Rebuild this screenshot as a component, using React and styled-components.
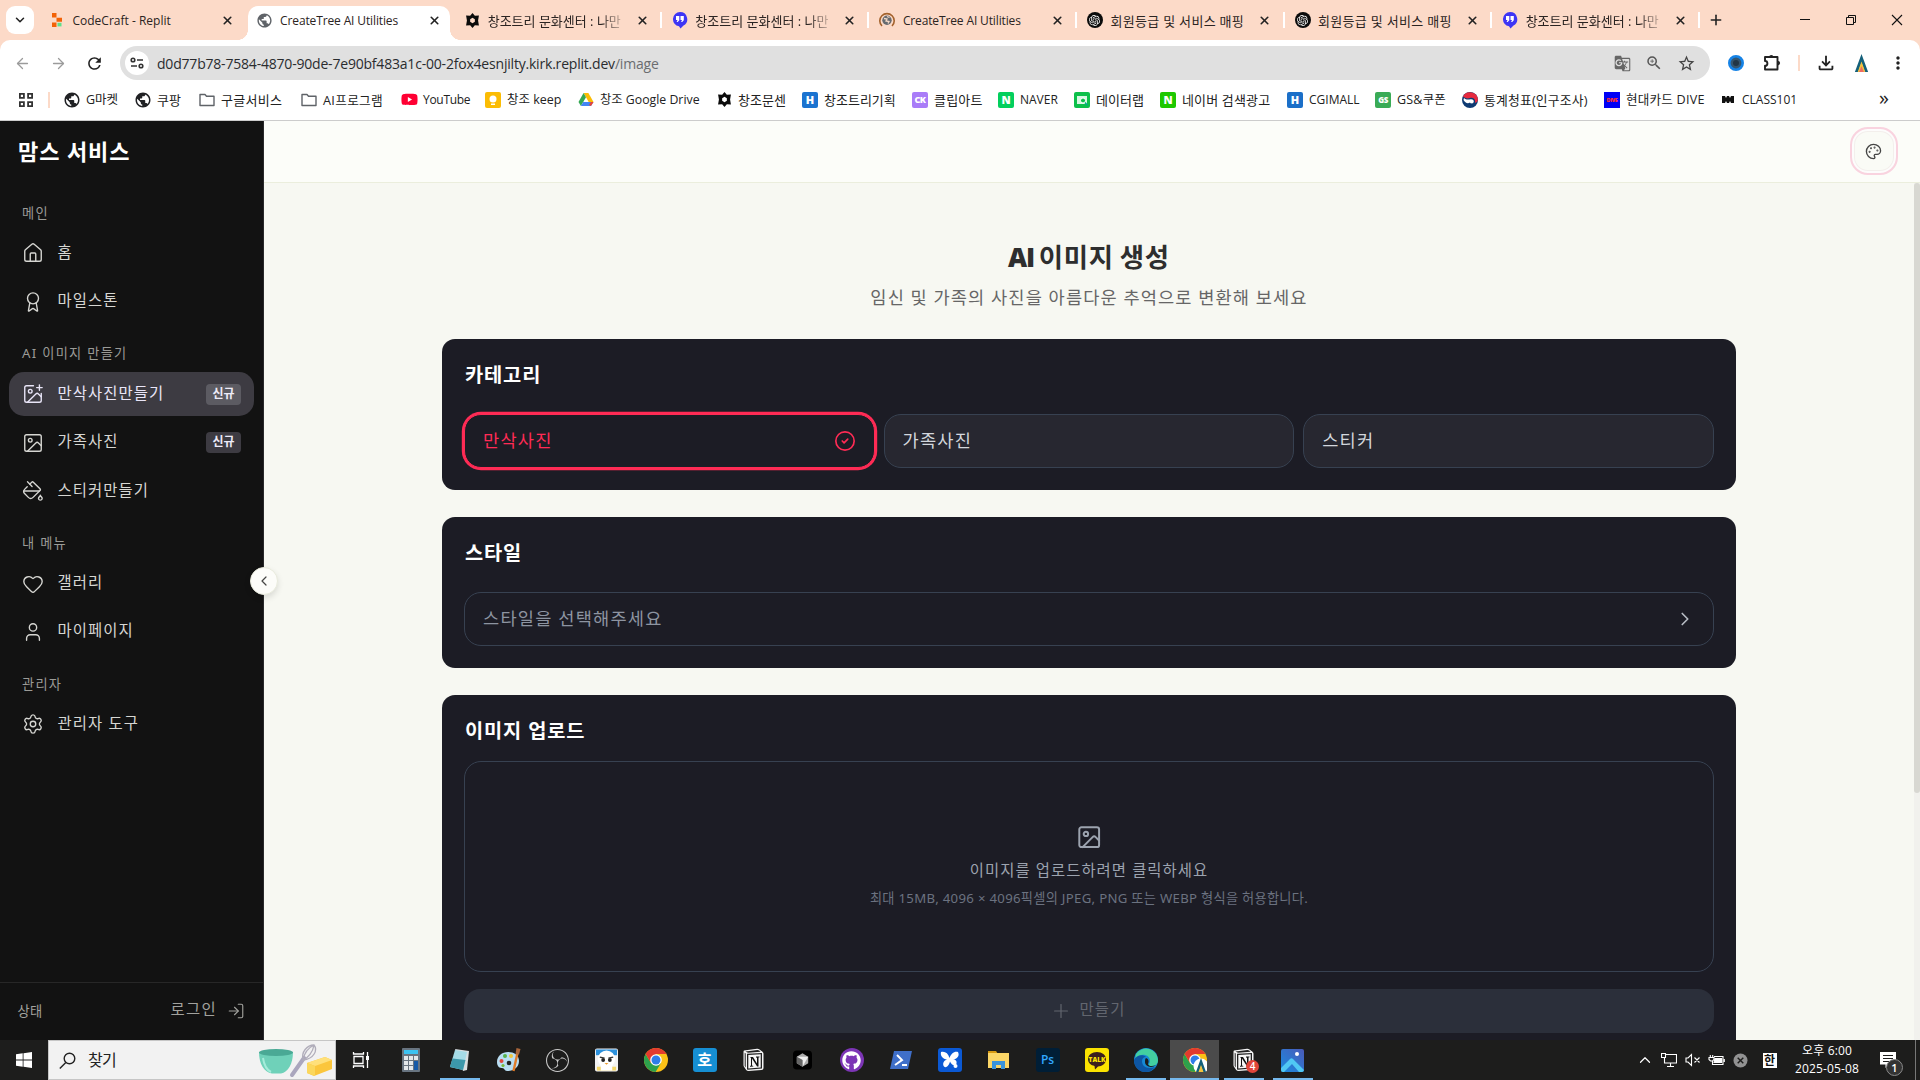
import React from "react";
import styled, { createGlobalStyle, css } from "styled-components";
import {
  ArrowLeft, ArrowRight, Award, ChevronDown, ChevronLeft, ChevronRight, ChevronUp, CircleCheck,
  Heart, House, Image as ImageIcon, ImagePlus, LogIn, PaintBucket, Palette, Plus, Settings, User, X,
} from "lucide-react";
import {
  MdPublic, MdRefresh, MdOutlineExtension, MdStarBorder, MdGTranslate, MdZoomIn, MdMoreVert,
  MdOutlineFileDownload,
} from "react-icons/md";
import { FaGithub, FaYoutube } from "react-icons/fa";
import { SiObsstudio, SiOpenai } from "react-icons/si";

const UI = `"Open Sans", "Noto Sans CJK KR", sans-serif`;
const WEB = `"Noto Sans", "Noto Sans CJK KR", sans-serif`;

const Global = createGlobalStyle`
  *, *::before, *::after { box-sizing: border-box; }
  body { margin: 0; background: #fcdac8; overflow: hidden; }
  svg { display: block; flex: none; }
`;

const Screen = styled.div`
  width: 1920px; height: 1080px; display: flex; flex-direction: column; overflow: hidden;
  font-family: ${UI};
`;

/* ---------- browser chrome ---------- */
const TabStrip = styled.div`
  height: 40px; flex: none; display: flex; align-items: center; background: #fcdac8; padding-left: 6px;
`;
const TabSearch = styled.div`
  width: 28px; height: 28px; margin-right: 4px; border-radius: 9px; background: #fff;
  display: flex; align-items: center; justify-content: center;
`;
const Tab = styled.div`
  position: relative; width: 207.6px; height: 40px; flex: none; display: flex; align-items: center;
  padding-left: 11px; gap: 7.5px; font-size: ${(p) => p.$size || 12}px; color: #2b2422;
  ${(p) => p.$sep && css`
    &::after { content: ""; position: absolute; left: -1px; top: 12px; width: 2px; height: 16px; background: #fff; }
  `}
  ${(p) => p.$active && css`
    &::before {
      content: ""; position: absolute; z-index: 0; left: 2.4px; right: 3px; top: 6px; bottom: 0;
      background: #fff; border-radius: 10px 10px 0 0;
    }
    &::after {
      content: ""; position: absolute; left: -7.6px; right: -7px; bottom: 0; height: 10px;
      background:
        radial-gradient(circle at 0 0, transparent 9.6px, #fff 10px) left / 10px 10px no-repeat,
        radial-gradient(circle at 100% 0, transparent 9.6px, #fff 10px) right / 10px 10px no-repeat;
    }
  `}
`;
const TabIcon = styled.div`
  position: relative; z-index: 1; width: 16px; height: 16px; flex: none;
  display: flex; align-items: center; justify-content: center;
`;
const TabTitle = styled.div`
  position: relative; z-index: 1; width: 137px; flex: none; margin-right: -7.5px;
  white-space: nowrap; line-height: 20px; letter-spacing: ${(p) => p.$ls || 0}px; margin-top: 2px;
  ${(p) => p.$fade && css`mask-image: linear-gradient(90deg, #000 112px, transparent 140px);`}
`;
const TabClose = styled.div`
  position: relative; z-index: 1; width: 35px; display: flex; justify-content: center; color: #222;
`;
const NewTab = styled.div`width: 34px; display: flex; justify-content: center; color: #222; position: relative;
  &::before { content: ""; position: absolute; left: -1px; top: 0; width: 2px; height: 16px; background: #fff; }
`;
const WindowButtons = styled.div`
  margin-left: auto; display: flex; svg { width: 46px; }
`;

const Toolbar = styled.div`
  height: 46px; flex: none; display: flex; align-items: center; background: #fff;
  border-radius: 10px 10px 0 0; padding-left: 4px;
`;
const ToolButton = styled.div`
  width: ${(p) => p.$w || 36}px; flex: none; display: flex; justify-content: center; color: ${(p) => p.$c || "#222"};
`;
const Omnibox = styled.div`
  width: 1590px; height: 34px; margin-left: 8px; border-radius: 17px; background: #e0e0e0;
  display: flex; align-items: center; padding: 0 8px 0 5px; color: #2a2c2f; font-size: 14px;
`;
const SiteInfo = styled.div`
  width: 24px; height: 24px; margin-right: 8px; border-radius: 50%; background: #fff;
  display: flex; align-items: center; justify-content: center;
`;
const Url = styled.div`
  flex: 1; letter-spacing: -0.2px; white-space: nowrap; span { color: #6b6d70; }
`;
const ToolSeparator = styled.div`width: 2px; height: 16px; background: #fcdac8; margin: ${(p) => p.$m || "0 8px"};`;

const Bookmarks = styled.div`
  height: 35px; flex: none; display: flex; align-items: center; background: #fff; padding: 0 0 7px 18px;
  border-bottom: 1px solid #ccc; color: #222;
`;
const Bookmark = styled.div`
  width: ${(p) => p.$w}px; flex: none; display: flex; align-items: center; gap: 6px; white-space: nowrap;
  font-size: ${(p) => p.$size || 13}px; line-height: 18px; letter-spacing: ${(p) => p.$ls || 0}px;
`;
const BookmarkIcon = styled.div`width: 16px; height: 16px; display: flex; align-items: center; justify-content: center;`;
const Letter = styled.div`
  width: 16px; height: 16px; border-radius: ${(p) => p.$r ?? 2}px; background: ${(p) => p.$bg}; color: ${(p) => p.$c || "#fff"};
  font: 800 ${(p) => p.$fs || 11}px/16px ${UI}; letter-spacing: ${(p) => (p.$fs < 10 ? -0.5 : 0)}px;
  display: flex; align-items: center; justify-content: center;
`;
const More = styled.div`margin-left: auto; width: 72px; text-align: center; font-size: 20px; line-height: 16px; margin-top: -3px;`;

/* ---------- web page ---------- */
const Page = styled.div`
  height: 919px; flex: none; display: flex; background: #f7f8f2; font-family: ${WEB}; overflow: hidden;
`;
const Sidebar = styled.aside`
  position: relative; width: 264px; flex: none; background: #121212; border-right: 1px solid #29292b;
  display: flex; flex-direction: column; color: #d6d6d2;
`;
const Brand = styled.h1`
  margin: 0; padding: 13px 0 0 18px; height: 82.5px; font-size: 22px; line-height: 34px; font-weight: 700;
  color: #fff; letter-spacing: 0.9px;
`;
const NavGroup = styled.nav`margin-bottom: 20.6px; padding: 0 9px;`;
const NavHeading = styled.div`
  height: 18px; margin-bottom: 9.9px; padding-left: 13px; font-size: 13.2px; line-height: 18px;
  letter-spacing: 1.3px; color: #9b9b97;
`;
const NavItem = styled.div`
  height: 44px; margin-bottom: 4.4px; padding: 0 13px; border-radius: 15px; display: flex; align-items: center; gap: 13.5px;
  font-size: 15.4px; line-height: 22px; letter-spacing: 1.1px; white-space: nowrap;
  ${(p) => p.$active && css`background: #3d3b42; color: #e9e5f7;`}
  &:last-child { margin-bottom: 0; }
`;
const NavLabel = styled.span`flex: 1; margin-top: -1px;`;
const Badge = styled.span`
  width: 35px; height: 21px; border-radius: 4px; background: ${(p) => (p.$active ? "#5c5b62" : "#3d3b42")};
  color: #eeebf8; font-size: 12px; font-weight: 600; line-height: 20px; letter-spacing: 0; text-align: center;
`;
const Collapse = styled.button`
  position: absolute; z-index: 2; left: 250px; top: 446px; width: 28px; height: 28px; padding: 0; border-radius: 50%;
  border: 1px solid #e9ebdd; background: #fcfcf9; color: #444; display: flex; align-items: center; justify-content: center;
  box-shadow: 0 3px 6px rgba(0, 0, 0, 0.12);
`;
const SideFooter = styled.div`
  margin-top: auto; height: 58px; border-top: 1px solid #272727; padding: 0 18px 2px 17.5px; color: #a2a29e;
  display: flex; align-items: center; font-size: 13.2px; letter-spacing: 0.4px;
`;
const Login = styled.div`
  margin-left: auto; display: flex; align-items: center; gap: 10px; font-size: 15.4px; line-height: 22px; letter-spacing: 1.3px;
  span { margin-top: -2px; }
`;

const Main = styled.main`flex: 1; display: flex; flex-direction: column; min-width: 0;`;
const TopBar = styled.header`
  height: 62px; flex: none; background: #fcfdf9; border-bottom: 1px solid #ebeedd;
  display: flex; justify-content: flex-end; align-items: center; padding: 0 22.5px 1px 0;
`;
const ThemeButton = styled.button`
  width: 48px; height: 48px; border-radius: 18px; border: 2px solid #f9d3df; background: #fafbf6;
  padding: 0; display: flex; align-items: center; justify-content: center; color: #444;
  box-shadow: inset 0 0 0 2px #fdfcfc, inset 0 0 0 3px #f3efec;
`;
const Scroller = styled.div`flex: 1; min-height: 0; display: flex; overflow: hidden;`;
const Content = styled.div`flex: 1; display: flex; flex-direction: column; align-items: center; padding: 56.5px 0 0 0;`;
const ScrollTrack = styled.div`width: 6px; background: #f1f1ed; flex: none;`;
const ScrollThumb = styled.div`height: 610px; border-radius: 3px; background: #d8d8d2;`;

const PageTitle = styled.h2`
  margin: 0; font: 700 26.4px/35px "Open Sans", "Noto Sans CJK KR", sans-serif; color: #2e2e2e; letter-spacing: 0.75px;
  word-spacing: -1.5px; b { font-weight: 800; letter-spacing: -1.2px; margin-right: -1.5px; }
`;
const PageSubtitle = styled.p`
  margin: 9.5px 0 29px; font-size: 17.6px; line-height: 26px; color: #666; letter-spacing: 1.1px;
`;
const Cards = styled.div`width: 1294px; display: flex; flex-direction: column; gap: 27px;`;
const Card = styled.section`
  background: #1c1c25; border-radius: 13px; padding: 22px; height: ${(p) => p.$h}px; flex: none;
`;
const CardTitle = styled.h3`
  margin: 0 0 ${(p) => p.$gap || 26}px 1px; font-size: 19.8px; line-height: 27px; font-weight: 700; color: #fff; letter-spacing: 0.85px;
`;
const Options = styled.div`display: grid; grid-template-columns: repeat(3, 1fr); gap: 8.8px;`;
const Field = styled.div`
  height: 54px; border: 1px solid #374151; border-radius: 17px; padding: 0 17.5px 0 18px; display: flex; align-items: center;
  justify-content: space-between; font-size: 17.6px; line-height: 24px; color: ${(p) => p.$c || "#d3d7dd"};
  background: ${(p) => p.$bg || "transparent"};
  span { margin-top: -2px; letter-spacing: 1.2px; }
  ${(p) => p.$selected && css`
    border-color: #ff2b55; color: #ff2b55; background: #1c1c25; box-shadow: 0 0 0 2.2px #ff2b55;
  `}
`;
const DropZone = styled.div`
  height: 210.5px; border: 1px solid #374151; border-radius: 17px; display: flex; flex-direction: column; align-items: center;
  padding-top: 62px;
`;
const DropTitle = styled.div`margin-top: 9.5px; font-size: 15.4px; line-height: 22px; color: #9ca3af; letter-spacing: 1.07px;`;
const DropHint = styled.div`margin-top: 7px; font-size: 13.2px; line-height: 18px; color: #6b7280; letter-spacing: 0.3px;`;
const Generate = styled.button`
  width: 100%; height: 44px; margin-top: 17px; border: 0; border-radius: 16px; background: #2b2f3a; color: #62666f;
  display: flex; align-items: center; justify-content: center; gap: 8px; font: 15.4px/22px ${WEB}; letter-spacing: 1.2px;
  padding: 0 2px 0 0; span { margin-top: -1px; margin-left: -1px; }
`;

/* ---------- task bar ---------- */
const Taskbar = styled.div`height: 40px; flex: none; display: flex; background: #1d1d1c; color: #fff;`;
const Start = styled.div`width: 48px; display: flex; align-items: center; justify-content: center;`;
const SearchBox = styled.div`
  width: 288px; background: #f2f2f2; border: 1px solid #c6c6c6; display: flex; align-items: center; padding: 0 2px 0 10px;
  color: #222; font-size: 16px; span { flex: 1; padding-left: 12px; margin-top: -2px; letter-spacing: -0.6px; }
`;
const TaskItem = styled.div`
  position: relative; width: 49px; display: flex; align-items: center; justify-content: center;
  background: ${(p) => (p.$active ? "#4b4b4b" : "transparent")};
  &:nth-child(3) { margin-right: 1px; }
  &::after { content: ""; position: absolute; bottom: 0; height: 2px; background: #76b9ed;
    left: ${(p) => (p.$active ? 0 : 4.5)}px; right: ${(p) => (p.$active ? 0 : 4.5)}px; display: ${(p) => (p.$open ? "block" : "none")}; }
`;
const AppTile = styled.div`
  width: 24px; height: 24px; border-radius: ${(p) => p.$r ?? 3}px; background: ${(p) => p.$bg}; color: ${(p) => p.$c || "#fff"};
  font: 600 ${(p) => p.$fs || 12}px/24px ${UI}; text-align: center; display: flex; align-items: center; justify-content: center;
`;
const CountDot = styled.div`
  position: absolute; left: 27px; top: 20px; width: 13px; height: 13px; border-radius: 50%; background: #e0453a;
  font: 600 10px/13px ${UI}; text-align: center;
`;
const Tray = styled.div`margin-left: auto; display: flex; align-items: center;`;
const TrayIcon = styled.div`width: ${(p) => p.$w || 24}px; display: flex; justify-content: center;`;
const Ime = styled.div`
  width: 14px; height: 15px; background: #fff; color: #111; font: 700 12px/15px ${WEB};
  display: flex; align-items: center; justify-content: center;
`;
const Clock = styled.div`
  width: 81px; text-align: center; font-size: 12px; line-height: 18px; letter-spacing: 0.15px; padding-bottom: 1px;
`;
const Notice = styled.div`
  position: relative; width: 34px; height: 40px; margin-left: 3.5px; display: flex; align-items: center; justify-content: center;
`;
const NoticeCount = styled.div`
  position: absolute; left: 15px; top: 19px; width: 17px; height: 17px; border: 1px solid #8a8a8a; border-radius: 50%;
  background: #333; font: 600 11px/15px ${UI}; text-align: center;
`;
const ShowDesktop = styled.div`width: 5px; height: 40px; border-left: 1px solid #777; margin-left: 10px;`;

/* ---------- drawings ---------- */
const HexStar = ({ s = 15 }) => (
  <svg width={s} height={s} viewBox="0 0 14 14">
    <path fillRule="evenodd" fill="#0b0b0b" d="M7 0l2.200 2.500 3.800-.2L12.200 7 13 11.700l-3.800-.2L7 14l-2.200-2.500-3.800.2L1.800 7 1 2.300l3.800.2zM7 4.500L4.800 5.750v2.500L7 9.500l2.200-1.250v-2.500z" />
  </svg>
);
const Quote = () => (
  <svg width="16" height="17" viewBox="0 0 16 17">
    <path fill="#3d35f5" d="M8 0a7.200 7.200 0 0 1 3.500 13.500L8.500 16.500 7 14.300A7.200 7.200 0 0 1 8 0z" />
    <path fill="#fff" d="M4 4h3.300v4.200L5.700 10H4.600l.9-2H4zm4.500 0h3.300v4.200L10.200 10H9.100l.9-2H8.500z" />
  </svg>
);
const Swirl = () => (
  <svg width="16" height="16" viewBox="0 0 16 16" fill="none">
    <path d="M3 14A7.200 7.200 0 1 1 13 14" stroke="#a4622c" strokeWidth="1.600" />
    <circle cx="8" cy="8.200" r="4.700" fill="#666b70" />
    <path d="M5 6.500l3 .5-1 2 3 .5-1 2M8 4.500l2.500 1" stroke="#f3d8c7" strokeWidth="1.300" />
  </svg>
);
const Gpt = () => <Letter $bg="#0b0b0b" $r={8}><SiOpenai size={11} /></Letter>;
const Replit = () => (
  <svg width="16" height="16" viewBox="0 0 16 16">
    <path fill="#f26207" d="M3 1h4.500v4.500H3zM7.500 5.800H13v4H7.500zM3 10.500h4.500V15H3z" /><path fill="#5fe08a" d="M8.500 10.800h4v3.600h-4z" />
  </svg>
);
const Drive = () => (
  <svg width="16" height="15" viewBox="0 0 16 15">
    <path fill="#fbbc04" d="M5.600 1h4.800L15.500 10h-4.800z" /><path fill="#34a853" d="M5.600 1L8 5.300 2.900 14 .5 10z" />
    <path fill="#4285f4" d="M5.200 10h10.300L13 14H2.900z" /><path fill="#ea4335" d="M12.900 10h2.600L13 14l-2-1z" />
  </svg>
);
const Taegeuk = () => (
  <svg width="16" height="16" viewBox="0 0 16 16">
    <circle cx="8" cy="8" r="8" fill="#0f3b73" /><path fill="#e6293e" d="M1 4.500A8 8 0 0 1 16 8a4 4 0 0 1-3 3c1-4-2-6-5-5S3 6 1 4.500z" />
    <path fill="#fff" d="M2 6c2 2 4.500 1.500 6.500 1.200 2.500-.3 4 1.300 3 3.300-1 1.500-3 1-3.500 0C6 12 3 11 1.500 8z" />
  </svg>
);
const Chrome = ({ s = 24, children }) => (
  <svg width={s} height={s} viewBox="0 0 24 24">
    <circle cx="12" cy="12" r="12" fill="#fbc116" />
    <path fill="#2da14c" d="M1.600 6a12 12 0 0 0 10 18L17 15l-5 2-5-2z" />
    <path fill="#e33b2e" d="M1.600 6A12 12 0 0 1 22.400 6H12l-5 9z" />
    <circle cx="12" cy="12" r="5.800" fill="#fff" /><circle cx="12" cy="12" r="4.500" fill="#2f7de9" />{children}
  </svg>
);
const Peak = ({ s = 18 }) => (
  <svg width={s} height={s + 2} viewBox="0 0 18 20">
    <path fill="#14607a" d="M9 0l7 19h-3.500L9 9 5.500 19H2z" /><path fill="#f3c23c" d="M9 8l4 11H5z" /><path fill="#ef6a63" d="M9 13l2.500 6h-5z" />
  </svg>
);
const Tune = () => (
  <svg width="14" height="12" viewBox="0 0 14 12" fill="none" stroke="#333" strokeWidth="1.600">
    <circle cx="3" cy="3" r="1.800" /><path d="M7 3h6M1 9h6" /><circle cx="11" cy="9" r="1.800" />
  </svg>
);
const Apps = () => (
  <svg width="16" height="16" viewBox="0 0 16 16" fill="none" stroke="#333" strokeWidth="1.800">
    <path d="M1.900 1.900h4v4h-4zM10.100 1.900h4v4h-4zM1.900 10.100h4v4h-4zM10.100 10.100h4v4h-4z" />
  </svg>
);
const Folder = () => (
  <svg width="16" height="14" viewBox="0 0 16 14" fill="none" stroke="#5f6368" strokeWidth="1.400"><path d="M1 1.500h5l1.500 1.800H15v9.200H1z" strokeLinejoin="round" /></svg>
);
const Bowl = () => (
  <svg width="76" height="36" viewBox="0 0 76 36">
    <path d="M2 10h34c0 12-5 20-12 21.500h-9C7 30 2 22 2 10z" fill="#6fd1b9" /><ellipse cx="19" cy="10.500" rx="17" ry="3.500" fill="#4aa995" />
    <path d="M6 16c1 7 4 12 8 14" stroke="#a5ecda" strokeWidth="2" fill="none" />
    <path d="M35 33l12-17" stroke="#aaa6bd" strokeWidth="4" strokeLinecap="round" />
    <path d="M46 18c-2-8 4-15 11-15 4 5 0 14-11 15zM46 18c1-6 5-12 11-15M46 18c5-2 10-8 11-15" fill="none" stroke="#b0adba" strokeWidth="1.300" />
    <path d="M50 21l18-6 7 3v9l-18 7-7-3z" fill="#fbc63c" /><path d="M50 21l18-6 7 3-17 6z" fill="#ffe07a" /><path d="M50 21l8 3v10l-8-3z" fill="#fbd75c" />
  </svg>
);
const TaskView = () => (
  <svg width="18" height="16" viewBox="0 0 18 16" fill="none" stroke="#fff" strokeWidth="1.300">
    <path d="M2 4.500h9v7H2zM1.500 0v2h10V0M1.500 16v-2h10v2M15.500 0v16" /><path d="M14 4h3v4h-3z" fill="#fff" stroke="none" />
  </svg>
);
const Calc = () => (
  <svg width="20" height="24" viewBox="0 0 20 24">
    <rect x="1" width="18" height="24" rx="1" fill="#687480" /><path fill="#3cc3f2" d="M3 2h14v4H3z" />
    <path fill="#e3e8eb" d="M3 8h4v4H3zM8 8h4v4H8zM13 8h4v4h-4zM3 13h4v4H3zM8 13h4v4H8zM3 18h4v4H3zM8 18h4v4H8z" /><path fill="#155aa8" d="M13 13h4v9h-4z" />
  </svg>
);
const Notepad = () => (
  <svg width="24" height="24" viewBox="0 0 24 24">
    <path fill="#d9dee0" d="M7 1l14 2-2 19-4 1z" /><path fill="#a5dbe6" d="M7 2l12 2-4 18-13-3z" /><path fill="#3c98ab" d="M4.500 10.500L17.500 12l-2.500 10-13-3z" />
  </svg>
);
const Paint = () => (
  <svg width="24" height="24" viewBox="0 0 24 24">
    <path fill="#b9def2" d="M11 4C5 4 0 8 0 14c0 5 3 6 5 6 3 0 2 3 5 3 6 0 12-3 12-10 0-6-5-9-11-9z" /><circle cx="4.500" cy="13" r="2" fill="#e2473d" />
    <circle cx="8" cy="8" r="2" fill="#57b24b" /><circle cx="14" cy="8" r="2" fill="#f0c73d" /><circle cx="6" cy="17.500" r="1.600" fill="#7aba3c" /><circle cx="12" cy="15" r="2.300" fill="#222" />
    <path d="M20.500 5l-4 18" stroke="#e07b28" strokeWidth="2.400" /><path d="M19.500 0l4 1-1.500 5.500-3.500-.5z" fill="#a8653a" />
  </svg>
);
const Mascot = () => (
  <svg width="23" height="24" viewBox="0 0 24 24">
    <rect width="24" height="24" rx="2" fill="#f2f2f2" /><path fill="#2c91dc" d="M1 1h22v6H1z" /><circle cx="12" cy="11" r="9" fill="#fff" />
    <path fill="#f2d56a" d="M2 19h20v4H2z" /><path fill="#fff" d="M6 17h12v6H6z" /><circle cx="8.500" cy="12" r="2" fill="#222" /><circle cx="15.500" cy="12" r="2" fill="#222" />
    <path d="M5 9l5 1M19 9l-5 1" stroke="#333" strokeWidth="1.500" /><path fill="#ec9c2d" d="M10 15h4l-2 2z" />
  </svg>
);
const Notion = () => (
  <svg width="21" height="24" viewBox="0 0 21 24">
    <path fill="#f6f6f6" d="M1 2.500L14 .8q1.500-.1 2.500.7l3 2.300q1 .8 1 2V20q0 1.900-2 2L5.500 23q-1.500 0-2.300-1L1 18.800Q.5 18 .5 17V4q0-1.300.5-1.500z" />
    <path fill="#222" d="M2.500 3.400L14.500 2q1 0 1.700.6l1.300 1.200L5 4.800z" />
    <path fill="#222" fillRule="evenodd" d="M4 5.800L19 4.900v15.700L4.600 21.700Q4 21.700 4 21zM5.300 7v13.400l12.400-.9V6.200zM1.700 4.700l1 .9v13.800l-1-1.500z" />
    <path fill="#111" d="M7 9h3l4 6.500V9.700L13 9.400v-.8l3.500-.2v.8l-1 .3v9h-1.400L9 10.600v7l1.300.3v.7L7 18.800V18l1-.4V9.900z" />
  </svg>
);
const Cube = () => (
  <svg width="19" height="22" viewBox="0 2 20 20"><rect y="2" width="20" height="20" rx="4" fill="#000" />
    <path fill="#aaa" d="M10 5l6 3.500v7L10 19l-6-3.500v-7z" /><path fill="#eee" d="M4 8.500h12L10 19v-7z" /><path fill="#666" d="M4 8.500l6 3.500v7l-6-3.500z" /></svg>
);
const Shell = () => (
  <svg width="24" height="20" viewBox="0 0 24 20"><path fill="#3f6fc9" d="M5 1h18l-4 18H1z" /><path d="M8 5l5 5-7 5M13 15h5" stroke="#fff" strokeWidth="2" fill="none" /></svg>
);
const Butterfly = () => (
  <svg width="20" height="20" viewBox="0 0 20 20"><path fill="#fff" d="M1 2c4-1 7 1 8.500 6C11 4 14 1 18 2c2 4-1 7-5 7.500 3 0 4 2 3.500 4-1 3-5 2-6.500-2-1 4-4 7-6 5-2-3 0-6 3-7C3 9 0 6 1 2z" /><circle cx="15.500" cy="16" r="2" fill="#fff" /></svg>
);
const Explorer = () => (
  <svg width="23" height="20" viewBox="0 0 23 20"><path fill="#d79a12" d="M1 1h8l2 3H1z" /><path fill="#fbd667" d="M1 3h21v15H1z" /><path fill="#3a94dc" d="M5 11h13v8h-4v-4H9v4H5z" /></svg>
);
const Talk = () => (
  <AppTile $bg="#fbe300"><svg width="20" height="19" viewBox="0 0 20 19"><path fill="#3b1e1e" d="M10 1c5 0 9 3 9 7.300s-4 7.200-8 7.200L8 18.500 7.500 15C4 14.300 1 12 1 8.300 1 4 5 1 10 1z" />
    <text x="10" y="10.800" fontSize="6.500" fontWeight="800" textAnchor="middle" fill="#fbe300" fontFamily="Open Sans, sans-serif">TALK</text></svg></AppTile>
);
const Edge = () => (
  <svg width="24" height="24" viewBox="0 0 24 24"><circle cx="12" cy="12" r="12" fill="#1688d4" /><path fill="#43cfa0" d="M2 6a12 12 0 0 1 22 6c0 4-3 6-6 6-3 0-4-1-3-2 2-3 1-8-4-9-4-.7-7 1-10 5z" />
    <path fill="#0d56a4" d="M0 12c2-5 9-6 12-3-4 0-5 4-3 8 2 3 7 4 12 2a12 12 0 0 1-10 5C4 24 0 18 0 12z" /><path fill="#1d1d1c" d="M12 10c3 1 3 4 2 6 0 2 4 3 8 1-5 4-11 1-11-3 0-2 0-3 1-4z" /></svg>
);
const Photos = () => (
  <svg width="23" height="23" viewBox="0 0 23 23"><defs><linearGradient id="sky" x1="0" y1="1" x2="1" y2="0"><stop stopColor="#1a8be0" /><stop offset="1" stopColor="#4a5ab8" /></linearGradient></defs>
    <rect width="23" height="23" rx="2" fill="url(#sky)" /><path fill="#50c8f4" d="M0 19l9-9q1.500-1.500 3 0l11 11q-.5 2-2 2h-3L11 15l-8 8H2q-2 0-2-2z" /><circle cx="16" cy="5" r="2" fill="#fff" /></svg>
);

const K = "창조트리 문화센터 : 나만";
const TABS = [
  { icon: <Replit />, t: "CodeCraft - Replit" },
  { icon: <MdPublic size={17} color="#5f6368" />, t: "CreateTree AI Utilities", active: true, ls: -0.13 },
  { icon: <HexStar />, t: K, fade: true, size: 13 },
  { icon: <Quote />, t: K, fade: true, size: 13, sep: true },
  { icon: <Swirl />, t: "CreateTree AI Utilities", sep: true, ls: -0.13 },
  { icon: <Gpt />, t: "회원등급 및 서비스 매핑", size: 13, sep: true, ls: 0.3 },
  { icon: <Gpt />, t: "회원등급 및 서비스 매핑", size: 13, sep: true, ls: 0.3 },
  { icon: <Quote />, t: K, fade: true, size: 13, sep: true },
];

const globe = <MdPublic size={18} color="#202124" />;
const BOOKMARKS = [
  [globe, "G마켓", 71, 12.5], [globe, "쿠팡", 64, 13], [<Folder />, "구글서비스", 102, 13, 0.3], [<Folder />, "AI프로그램", 100, 12.7, 0.3],
  [<FaYoutube size={17} color="#f03" />, "YouTube", 84, 12, -0.3],
  [<Letter $bg="#fbbc04"><svg width="16" height="16" viewBox="0 0 16 16"><circle cx="8" cy="7" r="3.500" fill="#fff" /><path fill="#fff" d="M6 11.500h4V13H6z" /></svg></Letter>, "창조 keep", 93, 12.5],
  [<Drive />, "창조 Google Drive", 138, 12.3], [<HexStar />, "창조문센", 86, 13],
  [<Letter $bg="#1b73d0">H</Letter>, "창조트리기획", 110, 13], [<Letter $bg="#a97cf8" $fs={9}>CK</Letter>, "클립아트", 86, 13, 0.2],
  [<Letter $bg="#03cf5d">N</Letter>, "NAVER", 76, 12],
  [<Letter $bg="#0cc04a"><svg width="16" height="16" viewBox="0 0 16 16"><path fill="#d8f7e3" d="M3 4h10v8H3z" /><circle cx="9" cy="8.500" r="2.500" fill="#0cc04a" stroke="#fff" /><path d="M11 10.500l2.500 3" stroke="#0a8" strokeWidth="1.500" /></svg></Letter>, "데이터랩", 86, 13],
  [<Letter $bg="#1ec800">N</Letter>, "네이버 검색광고", 127, 13, 0.15], [<Letter $bg="#1b6fc8">H</Letter>, "CGIMALL", 88, 12],
  [<Letter $bg="#3aab56" $fs={8}>GS</Letter>, "GS&쿠폰", 87, 12.5, 0.2], [<Taegeuk />, "통계청표(인구조사)", 142, 12.8, 0.2],
  [<Letter $bg="#0000f5" $c="#f33" $fs={5.5} $r={0}>DIVE</Letter>, "현대카드 DIVE", 116, 12.6, 0.2],
  [<svg width="12" height="7" viewBox="0 0 12 7"><path d="M0 0h3l1 2 1-2h2l1 2 1-2h3v7H9L8 5 7 7H5L4 5 3 7H0z" fill="#111" /></svg>, "CLASS101", 80, 12],
];

const GROUPS = [
  ["메인", [[House, "홈"], [Award, "마일스톤"]]],
  ["AI 이미지 만들기", [[ImagePlus, "만삭사진만들기", true, true], [ImageIcon, "가족사진", true], [PaintBucket, "스티커만들기"]]],
  ["내 메뉴", [[Heart, "갤러리"], [User, "마이페이지"]]],
  ["관리자", [[Settings, "관리자 도구"]]],
];

const TASKS = [
  { i: <TaskView /> }, { i: <Calc /> }, { i: <Notepad />, open: true }, { i: <Paint /> },
  { i: <SiObsstudio size={23} color="#c9c9c9" /> }, { i: <Mascot /> }, { i: <Chrome /> },
  { i: <AppTile $bg="#168fd3" $fs={16}>호</AppTile> }, { i: <Notion /> }, { i: <Cube /> },
  { i: <AppTile $bg="#7c35b5" $r={12}><FaGithub size={19} /></AppTile> }, { i: <Shell /> },
  { i: <AppTile $bg="#0b59d4"><Butterfly /></AppTile> }, { i: <Explorer /> }, { i: <AppTile $bg="#001e36" $c="#31a8ff">Ps</AppTile> },
  { i: <Talk /> }, { i: <Edge />, open: true },
  { i: <Chrome><circle cx="18" cy="18" r="7.500" fill="#fff" /><path fill="#14607a" d="M18 10l5 14h-3l-2-6-2 6h-3z" /><path fill="#f3c23c" d="M18 17l2.500 7h-5z" /></Chrome>, open: true, active: true },
  { i: <><Notion /><CountDot>4</CountDot></>, open: true }, { i: <Photos />, open: true },
];

function BrowserChrome() {
  return (
    <>
      <TabStrip>
        <TabSearch><ChevronDown size={14} strokeWidth={2.600} color="#222" /></TabSearch>
        {TABS.map((t, i) => (
          <Tab key={i} $active={t.active} $sep={t.sep} $size={t.size}>
            <TabIcon>{t.icon}</TabIcon>
            <TabTitle $fade={t.fade} $ls={t.ls}>{t.t}</TabTitle>
            <TabClose><X size={13} strokeWidth={3} /></TabClose>
          </Tab>
        ))}
        <NewTab><Plus size={16} strokeWidth={2.400} /></NewTab>
        <WindowButtons>
          <svg height="12" viewBox="0 0 46 12"><path d="M18 5.500h10" stroke="#111" /></svg>
          <svg height="12" viewBox="0 0 46 12" fill="none" stroke="#111"><path d="M18.500 3.500h7v7h-7zM20.500 3.500v-2h7v7h-2" /></svg>
          <svg height="12" viewBox="0 0 46 12" stroke="#111" strokeWidth="1.100"><path d="M18 1l10 10M28 1L18 11" /></svg>
        </WindowButtons>
      </TabStrip>
      <Toolbar>
        <ToolButton $c="#9b9b9b"><ArrowLeft size={17} strokeWidth={1.800} /></ToolButton>
        <ToolButton $c="#9b9b9b"><ArrowRight size={17} strokeWidth={1.800} /></ToolButton>
        <ToolButton><MdRefresh size={19} /></ToolButton>
        <Omnibox>
          <SiteInfo><Tune /></SiteInfo>
          <Url>d0d77b78-7584-4870-90de-7e90bf483a1c-00-2fox4esnjilty.kirk.replit.dev<span>/image</span></Url>
          <ToolButton $w={32} $c="#666"><MdGTranslate size={17} /></ToolButton>
          <ToolButton $w={32} $c="#555"><MdZoomIn size={18} /></ToolButton>
          <ToolButton $w={32} $c="#444"><MdStarBorder size={19} /></ToolButton>
        </Omnibox>
        <ToolButton $w={52}>
          <svg width="16" height="16" viewBox="0 0 16 16"><circle cx="8" cy="8" r="6.700" fill="#35556e" stroke="#1683e6" strokeWidth="2.600" /><circle cx="8" cy="8" r="3" fill="#223646" /></svg>
        </ToolButton>
        <ToolButton $w={20}>
          <svg width="18" height="18" viewBox="0 0 18 18" fill="none" stroke="#222" strokeWidth="1.900" strokeLinejoin="round">
            <path d="M2 3h12.500v12.500H2v-3.700a2.400 2.400 0 0 0 0-4.800z" /><path fill="#222" stroke="none" d="M6.200 3a2.100 2.100 0 0 1 4.200 0zM15 7a2.100 2.100 0 0 1 0 4.200z" />
          </svg>
        </ToolButton>
        <ToolSeparator $m="0 8px 0 16px" />
        <ToolButton><MdOutlineFileDownload size={22} /></ToolButton>
        <ToolButton $w={34}><Peak s={17} /></ToolButton>
        <ToolButton $w={40}><MdMoreVert size={20} /></ToolButton>
      </Toolbar>
      <Bookmarks>
        <Apps />
        <ToolSeparator $m="0 14px" />
        {BOOKMARKS.map(([icon, label, w, size, ls]) => (
          <Bookmark key={label} $w={w} $size={size} $ls={ls}><BookmarkIcon>{icon}</BookmarkIcon>{label}</Bookmark>
        ))}
        <More>»</More>
      </Bookmarks>
    </>
  );
}

function SideNav() {
  return (
    <Sidebar>
      <Brand>맘스 서비스</Brand>
      {GROUPS.map(([heading, items]) => (
        <NavGroup key={heading}>
          <NavHeading>{heading}</NavHeading>
          {items.map(([Icon, label, badge, active]) => (
            <NavItem key={label} $active={active}>
              <Icon size={22} strokeWidth={1.500} />
              <NavLabel>{label}</NavLabel>
              {badge && <Badge $active={active}>신규</Badge>}
            </NavItem>
          ))}
        </NavGroup>
      ))}
      <Collapse><ChevronLeft size={16} strokeWidth={1.800} /></Collapse>
      <SideFooter>상태<Login><span>로그인</span><LogIn size={18} strokeWidth={1.500} /></Login></SideFooter>
    </Sidebar>
  );
}

export default function App() {
  return (
    <Screen>
      <Global />
      <BrowserChrome />
      <Page>
        <SideNav />
        <Main>
          <TopBar><ThemeButton><Palette size={17} strokeWidth={1.900} /></ThemeButton></TopBar>
          <Scroller>
            <Content>
              <PageTitle><b>AI</b> 이미지 생성</PageTitle>
              <PageSubtitle>임신 및 가족의 사진을 아름다운 추억으로 변환해 보세요</PageSubtitle>
              <Cards>
                <Card $h={151}>
                  <CardTitle>카테고리</CardTitle>
                  <Options>
                    <Field $selected><span>만삭사진</span><CircleCheck size={22} strokeWidth={1.800} /></Field>
                    <Field $bg="#272730"><span>가족사진</span></Field>
                    <Field $bg="#272730"><span>스티커</span></Field>
                  </Options>
                </Card>
                <Card $h={151}>
                  <CardTitle>스타일</CardTitle>
                  <Field $c="#8d94a1"><span>스타일을 선택해주세요</span><ChevronRight size={22} strokeWidth={1.800} color="#b8bdc5" /></Field>
                </Card>
                <Card $h={400}>
                  <CardTitle $gap={17}>이미지 업로드</CardTitle>
                  <DropZone>
                    <ImageIcon size={26.400} strokeWidth={1.800} color="#9ca3af" />
                    <DropTitle>이미지를 업로드하려면 클릭하세요</DropTitle>
                    <DropHint>최대 15MB, 4096 × 4096픽셀의 JPEG, PNG 또는 WEBP 형식을 허용합니다.</DropHint>
                  </DropZone>
                  <Generate><Plus size={22} strokeWidth={1.300} /><span>만들기</span></Generate>
                </Card>
              </Cards>
            </Content>
            <ScrollTrack><ScrollThumb /></ScrollTrack>
          </Scroller>
        </Main>
      </Page>
      <Taskbar>
        <Start><svg width="16" height="16" viewBox="0 0 16 16"><path fill="#fff" d="M0 2.200l6.700-.9v6.300H0zM7.500 1.200L16 0v7.600H7.500zM0 8.400h6.700v6.300L0 13.800zM7.500 8.400H16V16l-8.500-1.200z" /></svg></Start>
        <SearchBox>
          <svg width="17" height="17" viewBox="0 0 17 17" fill="none" stroke="#222" strokeWidth="1.400"><circle cx="10.500" cy="6.500" r="5.300" /><path d="M6.800 10.500L.8 16.500" /></svg>
          <span>찾기</span><Bowl />
        </SearchBox>
        {TASKS.map((t, i) => <TaskItem key={i} $open={t.open} $active={t.active}>{t.i}</TaskItem>)}
        <Tray>
          <TrayIcon><ChevronUp size={18} strokeWidth={1.600} /></TrayIcon>
          <TrayIcon><svg width="16" height="16" viewBox="0 0 16 16" fill="none" stroke="#fff" strokeWidth="1.100"><path d="M5 2.500h10.500v8.500H3.500V6M9.500 11v3M6 14.500h7M.5 1.500h4v4h-4z" /></svg></TrayIcon>
          <TrayIcon><svg width="16" height="14" viewBox="0 0 16 14" fill="none" stroke="#fff" strokeWidth="1.100"><path d="M1 5h2l3.500-3.500v11L3 9H1zM9.500 4.500l5 5M14.500 4.500l-5 5" /></svg></TrayIcon>
          <TrayIcon><svg width="17" height="14" viewBox="0 0 17 14" fill="none" stroke="#fff" strokeWidth="1.100"><path d="M6 3.500h9v8H4.500V8M16.300 6v3M1 4.500h5v2L4.500 8h-2L1 6.500zM2.300 2v2.500M4.700 2v2.500" /><path fill="#fff" d="M7 5.500h6.500v4H6z" /></svg></TrayIcon>
          <TrayIcon><svg width="15" height="15" viewBox="0 0 15 15"><circle cx="7.500" cy="7.500" r="7" fill="#929292" /><path d="M4.700 4.700l5.600 5.600M10.300 4.700l-5.600 5.600" stroke="#1d1d1c" strokeWidth="1.400" /></svg></TrayIcon>
          <TrayIcon $w={34}><Ime>한</Ime></TrayIcon>
          <Clock>오후 6:00<br />2025-05-08</Clock>
          <Notice><svg width="16" height="16" viewBox="0 0 16 16"><path fill="#fff" d="M0 0h16v12.500H9L5.500 16v-3.500H0z" /><path d="M3 3.500h10M3 6.500h10M3 9.500h6" stroke="#1d1d1c" /></svg><NoticeCount>1</NoticeCount></Notice>
          <ShowDesktop />
        </Tray>
      </Taskbar>
    </Screen>
  );
}
